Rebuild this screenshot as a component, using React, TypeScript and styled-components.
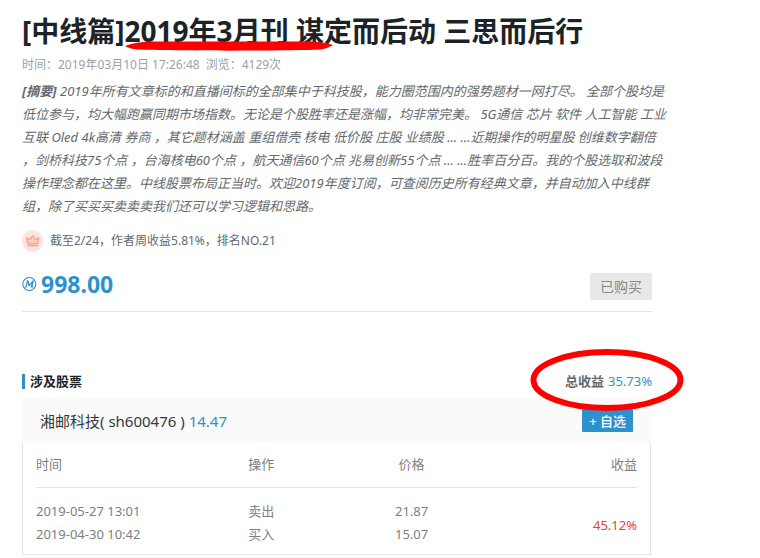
import React from 'react';
import styled, { createGlobalStyle } from 'styled-components';

const GlobalStyle = createGlobalStyle`
  * { box-sizing: border-box; }
  body {
    margin: 0;
    background: #fff;
    color: #63696c;
    font-family: "Noto Sans", "Noto Sans CJK SC", sans-serif;
    font-size: 13px;
  }
  button { font-family: inherit; }
`;

const Page = styled.main`
  padding: 11px 108px 0 22px;
`;

const Title = styled.h1`
  margin: 0;
  color: #1c2327;
  font-size: 28px;
  line-height: 40px;
  white-space: nowrap;
`;

const Marked = styled.span`
  position: relative;
`;

const Underline = styled.svg`
  position: absolute;
  left: 0;
  bottom: -1px;
  width: 208px;
  height: 10px;
`;

const Meta = styled.div`
  display: flex;
  gap: 6px;
  color: #9a9fa2;
  font-size: 12px;
  line-height: 28px;
`;

const Abstract = styled.p`
  margin: 1px 0 0;
  font-size: 13px;
  font-style: italic;
  line-height: 23px;
  white-space: nowrap;
`;

const Ranking = styled.div`
  display: flex;
  align-items: center;
  gap: 7px;
  margin-top: 12px;
  font-size: 12px;
  line-height: 22px;
`;

const Purchase = styled.section`
  display: flex;
  align-items: center;
  justify-content: space-between;
  height: 60px;
  padding-top: 10px;
  border-bottom: 1px solid #e4e4e4;
`;

const Price = styled.div`
  display: flex;
  align-items: center;
  gap: 4px;
  padding-bottom: 6px;
  color: #2e91cc;
  font-size: 23px;
  font-weight: 700;
  line-height: 30px;
`;

const Bought = styled.button`
  height: 27px;
  padding: 0 10px;
  border: 0;
  border-radius: 1px;
  background: #e8e8e8;
  color: #888;
  font-size: 14px;
  line-height: 27px;
`;

const SectionHead = styled.header`
  display: flex;
  align-items: center;
  justify-content: space-between;
  margin-top: 57px;
  line-height: 24px;
`;

const SectionTitle = styled.h2`
  display: flex;
  align-items: center;
  gap: 5px;
  margin: 0;
  color: #1c2327;
  font-size: 13px;

  &::before {
    content: "";
    width: 3px;
    height: 15px;
    background: #2e91cc;
  }
`;

const Total = styled.div`
  position: relative;
  display: flex;
  gap: 4px;
  font-size: 13px;
`;

const Ring = styled.svg`
  position: absolute;
  right: -32px;
  top: -20px;
  width: 154px;
  height: 62px;
  pointer-events: none;
`;

const Blue = styled.span`
  color: #2e91cc;
`;

const Stock = styled.section`
  margin: 5px 1px 0 0;
`;

const StockHead = styled.div`
  display: flex;
  align-items: center;
  justify-content: space-between;
  height: 45px;
  padding: 0 18px;
  background: #fafafa;
  color: #33383b;
  font-size: 15px;
`;

const Follow = styled.button`
  height: 23px;
  padding: 0 7px;
  border: 0;
  border-radius: 1px;
  background: #2e91cc;
  color: #fff;
  font-size: 13px;
  font-weight: 500;
  line-height: 22px;
`;

const TableBox = styled.div`
  padding: 0 13px 8px;
  border: 1px solid #e4e4e4;
  border-top: 0;
`;

const Trades = styled.table`
  width: 100%;
  table-layout: fixed;
  border-collapse: collapse;
  color: #7c8082;
  line-height: 23px;

  thead tr { border-bottom: 1px solid #e4e4e4; }
  tbody::before {
    content: "";
    display: table-row;
    height: 13px;
  }
`;

type Align = { $align?: 'left' | 'center' | 'right' };

const HeadCell = styled.th<Align>`
  height: 44px;
  padding: 0;
  font-weight: 400;
  text-align: ${p => p.$align ?? 'center'};
`;

const Cell = styled.td<Align>`
  padding: 0;
  text-align: ${p => p.$align ?? 'center'};
`;

const Gain = styled(Cell)`
  padding-top: 4px;
  color: #e8442a;
`;

const Crown = () => (
  <svg width="21" height="22" viewBox="0 0 21 22" aria-hidden="true">
    <ellipse cx="10.5" cy="11" rx="10.5" ry="11" fill="#fee4df" />
    <path d="M4.5 7.800l3 1.700 3.200-3.700 3.200 3.700 3-1.700-1.200 6H5.700z" fill="#fccabf" stroke="#f3a08d" strokeWidth="1.200" strokeLinejoin="round" />
    <path d="M5.500 15.700h10.500" stroke="#f3a08d" strokeWidth="1.300" />
  </svg>
);

const Coin = () => (
  <svg width="15" height="16" viewBox="0 0 15 16" fill="none" stroke="#2e91cc" aria-hidden="true">
    <circle cx="7.3" cy="8" r="6.5" strokeWidth="1.1" />
    <path d="M2.8 11h2M4 11l1.600-6 1.600 4.600L10.800 5 9.800 11M8.600 11h2.600M4.400 5h1.400M10.200 5h1.600" strokeWidth="1.1" />
    <path d="M6 5.500l1.400 4.200M10.800 5.200l-1.100 5.600" strokeWidth="1.600" />
  </svg>
);

const trades = [
  { time: '2019-05-27 13:01', action: '卖出', price: '21.87' },
  { time: '2019-04-30 10:42', action: '买入', price: '15.07' },
];

export default function App() {
  return (
    <Page lang="zh-CN">
      <GlobalStyle />
      <Title>
        [中线篇]
        <Marked>
          2019年3月刊 谋
          <Underline viewBox="0 0 210 10" preserveAspectRatio="none" aria-hidden="true">
            <path d="M0 5C8 2 16 .8 25 .5H190C198 1 205 2 210 4C206 6 203 8 197 8.500C160 10 50 10 12 8.500C7 8 3 7 0 5z" fill="#f00" />
          </Underline>
        </Marked>
        定而后动 三思而后行
      </Title>
      <Meta>
        <span>时间：2019年03月10日 17:26:48</span>
        <span>浏览：4129次</span>
      </Meta>
      <Abstract>
        <b>[摘要]</b> 2019年所有文章标的和直播间标的全部集中于科技股，能力圈范围内的强势题材一网打尽。 全部个股均是<br />
        低位参与，均大幅跑赢同期市场指数。无论是个股胜率还是涨幅，均非常完美。 5G通信 芯片 软件 人工智能 工业<br />
        互联 Oled 4k高清 券商 ，其它题材涵盖 重组借壳 核电 低价股 庄股 业绩股 ... ...近期操作的明星股 创维数字翻倍<br />
        ，剑桥科技75个点 ，台海核电60个点 ，航天通信60个点 兆易创新55个点 ... ...胜率百分百。我的个股选取和波段<br />
        操作理念都在这里。中线股票布局正当时。欢迎2019年度订阅，可查阅历史所有经典文章，并自动加入中线群<br />
        组，除了买买买卖卖卖我们还可以学习逻辑和思路。
      </Abstract>
      <Ranking>
        <Crown />
        <span>截至2/24，作者周收益5.81%，排名NO.21</span>
      </Ranking>
      <Purchase>
        <Price><Coin />998.00</Price>
        <Bought type="button">已购买</Bought>
      </Purchase>
      <SectionHead>
        <SectionTitle>涉及股票</SectionTitle>
        <Total>
          <b>总收益</b>
          <Blue>35.73%</Blue>
          <Ring viewBox="0 0 154 62" aria-hidden="true">
            <ellipse cx="77" cy="31" rx="73.500" ry="28" fill="none" stroke="#f00" strokeWidth="6" />
          </Ring>
        </Total>
      </SectionHead>
      <Stock>
        <StockHead>
          <span>湘邮科技( sh600476 ) <Blue>14.47</Blue></span>
          <Follow type="button">+ 自选</Follow>
        </StockHead>
        <TableBox>
          <Trades>
            <thead>
              <tr>
                <HeadCell $align="left" scope="col">时间</HeadCell>
                <HeadCell scope="col">操作</HeadCell>
                <HeadCell scope="col">价格</HeadCell>
                <HeadCell $align="right" scope="col">收益</HeadCell>
              </tr>
            </thead>
            <tbody>
              {trades.map((t, i) => (
                <tr key={t.time}>
                  <Cell $align="left">{t.time}</Cell>
                  <Cell>{t.action}</Cell>
                  <Cell>{t.price}</Cell>
                  {i === 0 && <Gain $align="right" rowSpan={trades.length}>45.12%</Gain>}
                </tr>
              ))}
            </tbody>
          </Trades>
        </TableBox>
      </Stock>
    </Page>
  );
}
